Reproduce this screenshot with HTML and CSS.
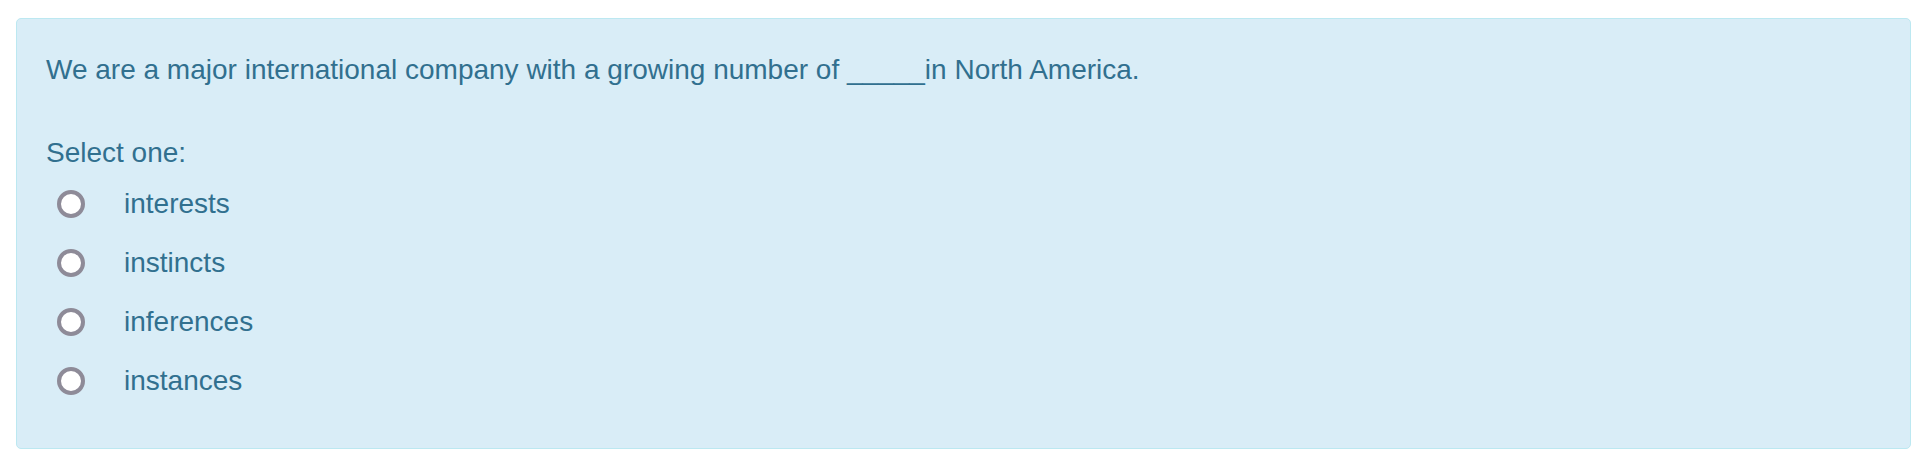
FILE: index.html
```html
<!DOCTYPE html>
<html lang="en">
<head>
<meta charset="utf-8">
<title>Question</title>
<link rel="stylesheet" href="styles.css">
</head>
<body>
<div class="formulation">
  <div class="qtext">We are a major international company with a growing number of _____in North America.</div>
  <div class="ablock">
    <div class="prompt">Select one:</div>
    <div class="answer">
      <div class="option"><input type="radio" name="q1" id="a0"><label for="a0">interests</label></div>
      <div class="option"><input type="radio" name="q1" id="a1"><label for="a1">instincts</label></div>
      <div class="option"><input type="radio" name="q1" id="a2"><label for="a2">inferences</label></div>
      <div class="option"><input type="radio" name="q1" id="a3"><label for="a3">instances</label></div>
    </div>
  </div>
</div>
</body>
</html>
```

FILE: styles.css
```css
html, body {
  margin: 0;
  padding: 0;
  background: #ffffff;
}
body {
  padding: 18px 19px 12px 16px;
  font-family: "Liberation Sans", Arial, sans-serif;
  font-size: 28px;
  line-height: 42px;
  color: #31708f;
}
.formulation {
  background: #d9edf7;
  border: 1px solid #bce8f1;
  border-radius: 5px;
  padding: 30px 29px 46px 29px;
}
.qtext {
  margin: 0 0 41px 0;
}
.prompt {
  margin-bottom: 9px;
}
.answer {
  display: flex;
  flex-direction: column;
  gap: 17px;
}
.option {
  display: flex;
  align-items: center;
  padding-left: 11px;
}
.option input {
  appearance: none;
  -webkit-appearance: none;
  width: 28px;
  height: 28px;
  margin: 0 39px 0 0;
  border: 4px solid #8e8b98;
  border-radius: 50%;
  background: #ffffff;
  box-sizing: border-box;
  flex: none;
}
.option label {
  color: #31708f;
}
```
